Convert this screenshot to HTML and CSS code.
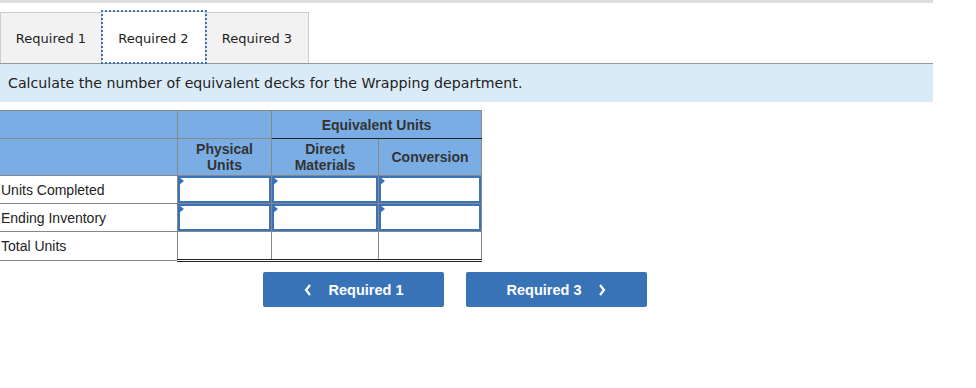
FILE: index.html
```html
<!DOCTYPE html>
<html lang="en">
<head>
    <meta charset="UTF-8">
    <title>Required 2</title>
    <link rel="stylesheet" href="styles.css">
</head>
<body>

<div class="page">
    <div class="topbar"></div>

    <!-- tabs -->
    <div class="tabs">
        <div class="tab">Required 1</div>
        <div class="tab active">Required 2</div>
        <div class="tab">Required 3</div>
    </div>

    <div class="prompt">Calculate the number of equivalent decks for the Wrapping department.</div>

    <table class="units">
        <tr class="head">
            <th></th>
            <th></th>
            <th colspan="2" class="group">Equivalent Units</th>
        </tr>
        <tr class="head">
            <th></th>
            <th class="c-phys">Physical<br>Units</th>
            <th class="c-dm">Direct<br>Materials</th>
            <th class="c-conv">Conversion</th>
        </tr>
        <tr>
            <td class="label">Units Completed</td>
            <td class="entry"><span class="flag"></span></td>
            <td class="entry"><span class="flag"></span></td>
            <td class="entry"><span class="flag"></span></td>
        </tr>
        <tr>
            <td class="label">Ending Inventory</td>
            <td class="entry"><span class="flag"></span></td>
            <td class="entry"><span class="flag"></span></td>
            <td class="entry"><span class="flag"></span></td>
        </tr>
        <tr class="total">
            <td class="label">Total Units</td>
            <td></td>
            <td></td>
            <td></td>
        </tr>
    </table>

    <div class="nav">
        <button class="button">
            <svg class="chev" width="8" height="12" viewBox="0 0 8 12"><path d="M6 1 L2 6 L6 11" fill="none" stroke="#fff" stroke-width="2.2"/></svg>
            Required 1
        </button>
        <button class="button">
            Required 3
            <svg class="chev" width="8" height="12" viewBox="0 0 8 12"><path d="M2 1 L6 6 L2 11" fill="none" stroke="#fff" stroke-width="2.2"/></svg>
        </button>
    </div>
</div>

</body>
</html>
```

FILE: styles.css
```css
body {
    margin: 0;
    font-family: "DejaVu Sans", Verdana, sans-serif;
    color: #222;
    background: #fff;
}
.page {
    width: 933px;
}
.topbar {
    height: 3px;
    background-color: #dedede;
}
.tabs {
    display: flex;
    margin-top: 9px;
    border-bottom: 1px solid #999;
    height: 51px;
}
.tab {
    box-sizing: border-box;
    height: 51px;
    line-height: 51px;
    font-size: 13px;
    background-color: #f2f2f2;
    border: 1px solid #ccc;
    border-bottom: none;
    width: 102px;
    text-align: center;
}
.tab + .tab {
    border-left: none;
}
.tab:last-child {
    width: 103px;
}
.tab.active {
    background-color: #fff;
    outline: 2px dotted #3b73b9;
    outline-offset: -1px;
    width: 104px;
    height: 52px;
    margin-top: -1px;
    line-height: 53px;
    position: relative;
}
.prompt {
    background-color: #daebf8;
    height: 38px;
    line-height: 38px;
    padding-left: 8px;
    font-size: 14.2px;
    color: #222;
}
.units {
    margin-top: 8px;
    border-collapse: collapse;
    font-family: "Liberation Sans", Arial, sans-serif;
    font-size: 14px;
    color: #222;
}
.units th {
    background-color: #7aade4;
    border: 1px solid #888;
    font-weight: bold;
    color: #333;
    padding: 0;
    line-height: 16px;
}
.units tr.head:first-child th {
    height: 27px;
}
.units tr.head + tr.head th {
    height: 36px;
}
.units th.group {
    border-bottom: 1px solid #222;
}
.units td {
    border: 1px solid #888;
    height: 27px;
    padding: 0;
}
.units td.label {
    width: 176px;
    padding-left: 1px;
    border-left: none;
}
.units th:first-child {
    border-left: none;
}
.c-phys { width: 93px; }
.c-dm { width: 106px; }
.c-conv { width: 102px; }
.units td.entry {
    position: relative;
    box-shadow: inset 0 0 0 2px #3b73b9;
}
.flag {
    position: absolute;
    left: 1px;
    top: 1px;
    width: 0;
    height: 0;
    border-top: 4px solid transparent;
    border-bottom: 4px solid transparent;
    border-left: 5px solid #3b73b9;
}
.units tr.total td {
    border-top: 1px solid #222;
    border-bottom: 3px double #222;
}
.units tr.total td.label {
    border-top: 1px solid #888;
    border-bottom: 1px solid #888;
}
.nav {
    display: flex;
    gap: 22px;
    margin-top: 10px;
    margin-left: 263px;
}
.button {
    display: flex;
    align-items: center;
    justify-content: center;
    gap: 17px;
    width: 181px;
    height: 35px;
    background-color: #3873b8;
    color: #fff;
    border: none;
    border-radius: 2px;
    font-family: "Liberation Sans", Arial, sans-serif;
    font-weight: bold;
    font-size: 14.5px;
    cursor: pointer;
}
.chev {
    display: block;
}
```
